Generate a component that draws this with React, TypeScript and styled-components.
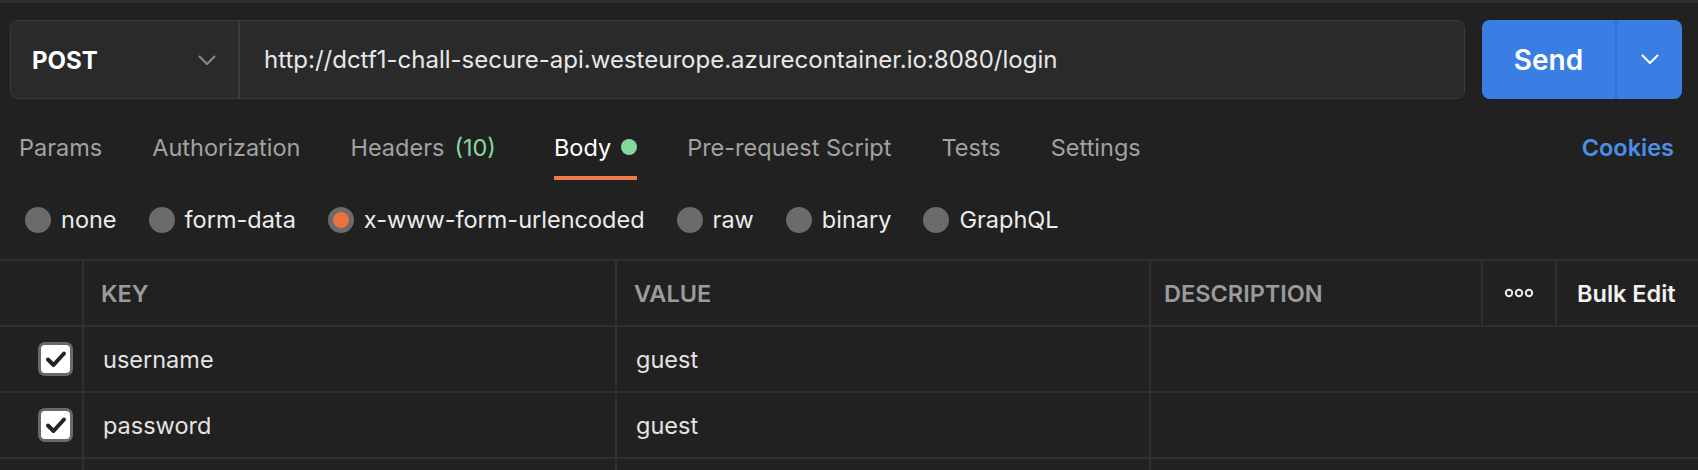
import styled, { createGlobalStyle } from 'styled-components';

const GlobalStyle = createGlobalStyle`
  html, body {
    margin: 0;
    padding: 0;
    background: #212121;
  }
  * {
    box-sizing: border-box;
  }
`;

const tabs = [
  { label: 'Params' },
  { label: 'Authorization' },
  { label: 'Headers', count: '(10)' },
  { label: 'Body', active: true, dot: true },
  { label: 'Pre-request Script' },
  { label: 'Tests' },
  { label: 'Settings' },
];

const bodyTypes = ['none', 'form-data', 'x-www-form-urlencoded', 'raw', 'binary', 'GraphQL'];

const params = [
  { key: 'username', value: 'guest' },
  { key: 'password', value: 'guest' },
];

const Chevron = ({ color }: { color: string }) => (
  <svg width="18" height="11" viewBox="0 0 18 11" fill="none">
    <path d="M1.5 1.5L9 9L16.5 1.5" stroke={color} strokeWidth="2" strokeLinecap="round" strokeLinejoin="round" />
  </svg>
);

const CheckMark = () => (
  <svg width="22" height="18" viewBox="0 0 22 18" fill="none">
    <path d="M3 9.5L8.5 15L19 3.5" stroke="#232323" strokeWidth="4" strokeLinecap="round" strokeLinejoin="round" />
  </svg>
);

const MoreDots = () => (
  <svg width="30" height="10" viewBox="0 0 30 10" fill="none">
    <circle cx="5" cy="5" r="3.2" stroke="#e8e8e8" strokeWidth="2" />
    <circle cx="15" cy="5" r="3.2" stroke="#e8e8e8" strokeWidth="2" />
    <circle cx="25" cy="5" r="3.2" stroke="#e8e8e8" strokeWidth="2" />
  </svg>
);

const App = () => {
  return (
    <Page>
      <GlobalStyle />
      <RequestBar>
        <UrlBox>
          <MethodSelect>
            <span>POST</span>
            <Chevron color="#8a8a8a" />
          </MethodSelect>
          <UrlInput>http://dctf1-chall-secure-api.westeurope.azurecontainer.io:8080/login</UrlInput>
        </UrlBox>
        <SendGroup>
          <SendButton>Send</SendButton>
          <SendMenu>
            <Chevron color="#ffffff" />
          </SendMenu>
        </SendGroup>
      </RequestBar>

      <TabsRow>
        <TabList>
          {tabs.map((tab) => (
            <Tab key={tab.label} active={tab.active}>
              {tab.label}
              {tab.count && <Count>{tab.count}</Count>}
              {tab.dot && <StatusDot />}
            </Tab>
          ))}
        </TabList>
        <CookiesLink>Cookies</CookiesLink>
      </TabsRow>

      <RadioRow>
        {bodyTypes.map((type) => (
          <RadioOption key={type}>
            <RadioCircle selected={type === 'x-www-form-urlencoded'} />
            {type}
          </RadioOption>
        ))}
      </RadioRow>

      <Table>
        <HeaderRow>
          <Cell />
          <HeadCell>KEY</HeadCell>
          <HeadCell>VALUE</HeadCell>
          <HeadCell inset={13}>DESCRIPTION</HeadCell>
          <IconCell>
            <MoreDots />
          </IconCell>
          <BulkEdit>Bulk Edit</BulkEdit>
        </HeaderRow>
        {params.map((p) => (
          <BodyRow key={p.key}>
            <CheckCell>
              <Checkbox>
                <CheckMark />
              </Checkbox>
            </CheckCell>
            <TextCell>{p.key}</TextCell>
            <TextCell>{p.value}</TextCell>
            <TextCell />
          </BodyRow>
        ))}
        <BodyRow>
          <CheckCell />
          <TextCell />
          <TextCell />
          <TextCell />
        </BodyRow>
      </Table>
    </Page>
  );
};

export default App;

const Page = styled.div`
  width: 1698px;
  height: 470px;
  overflow: hidden;
  background: #212121;
  border-top: 3px solid #2f2f2f;
  font-family: Inter, 'Noto Sans', sans-serif;
  color: #e6e6e6;
`;

const RequestBar = styled.div`
  display: flex;
  gap: 17px;
  padding: 17px 16px 0 10px;
  height: 96px;
`;

const UrlBox = styled.div`
  flex: 1;
  display: flex;
  background: #2a2a2a;
  border: 1px solid #3b3b3b;
  border-radius: 8px;
`;

const MethodSelect = styled.div`
  width: 229px;
  display: flex;
  align-items: center;
  justify-content: space-between;
  padding: 2px 22px 0 21px;
  border-right: 2px solid #3b3b3b;
  font-size: 24px;
  font-weight: 700;
  color: #ffffff;
`;

const UrlInput = styled.div`
  flex: 1;
  display: flex;
  align-items: center;
  padding-left: 24px;
  font-size: 24px;
  color: #e8e8e8;
  white-space: nowrap;
`;

const SendGroup = styled.div`
  display: flex;
  width: 200px;
  background: #3a7ee4;
  border-radius: 8px;
  overflow: hidden;
`;

const SendButton = styled.div`
  width: 135px;
  display: flex;
  align-items: center;
  justify-content: center;
  font-size: 28px;
  font-weight: 600;
  color: #ffffff;
  border-right: 2px solid #3170d2;
`;

const SendMenu = styled.div`
  flex: 1;
  display: flex;
  align-items: center;
  justify-content: center;
`;

const TabsRow = styled.div`
  display: flex;
  justify-content: space-between;
  height: 81px;
  padding: 19px 24px 0 19px;
`;

const TabList = styled.div`
  display: flex;
  gap: 50px;
`;

const Tab = styled.div<{ active?: boolean }>`
  display: flex;
  align-items: center;
  gap: 10px;
  font-size: 23.5px;
  color: ${({ active }) => (active ? '#ffffff' : '#a2a2a2')};
  border-bottom: 4px solid ${({ active }) => (active ? '#ef7a4b' : 'transparent')};
  white-space: nowrap;
`;

const Count = styled.span`
  color: #86d99c;
  margin-right: 8px;
`;

const StatusDot = styled.span`
  width: 16px;
  height: 16px;
  border-radius: 50%;
  background: #86d99c;
`;

const CookiesLink = styled.div`
  display: flex;
  align-items: center;
  padding-bottom: 4px;
  font-size: 23.5px;
  font-weight: 600;
  color: #4b8fe9;
`;

const RadioRow = styled.div`
  display: flex;
  align-items: center;
  gap: 32px;
  height: 79px;
  padding-left: 25px;
`;

const RadioOption = styled.div`
  display: flex;
  align-items: center;
  gap: 10px;
  font-size: 23.5px;
  color: #ececec;
`;

const RadioCircle = styled.span<{ selected?: boolean }>`
  width: 26px;
  height: 26px;
  border-radius: 50%;
  background: ${({ selected }) => (selected ? '#ec7340' : '#6b6b6b')};
  border: ${({ selected }) => (selected ? '5px solid #6b6b6b' : 'none')};
`;

const Table = styled.div`
  border-top: 2px solid #303030;
`;

const HeaderRow = styled.div`
  display: grid;
  grid-template-columns: 82px 533px 534px 332px 74px 1fr;
  height: 66px;
  border-bottom: 2px solid #303030;
`;

const BodyRow = styled.div`
  display: grid;
  grid-template-columns: 82px 533px 534px 1fr;
  height: 66px;
  border-bottom: 2px solid #303030;
`;

const Cell = styled.div`
  display: flex;
  align-items: center;
  border-left: 2px solid #303030;

  &:first-child {
    border-left: none;
  }
`;

const HeadCell = styled(Cell)<{ inset?: number }>`
  padding-left: ${({ inset = 17 }) => inset}px;
  font-size: 23.5px;
  font-weight: 600;
  color: #9b9b9b;
`;

const IconCell = styled(Cell)`
  justify-content: center;
`;

const BulkEdit = styled(Cell)`
  padding-left: 20px;
  font-size: 23.5px;
  font-weight: 600;
  color: #f2f2f2;
`;

const CheckCell = styled(Cell)`
  justify-content: flex-end;
  padding-right: 9px;
`;

const TextCell = styled(Cell)`
  padding-left: 19px;
  font-size: 23.5px;
  color: #e4e4e4;
`;

const Checkbox = styled.div`
  width: 35px;
  height: 34px;
  border-radius: 7px;
  background: #ffffff;
  border: 3px solid #6a6a6a;
  display: flex;
  align-items: center;
  justify-content: center;
`;
